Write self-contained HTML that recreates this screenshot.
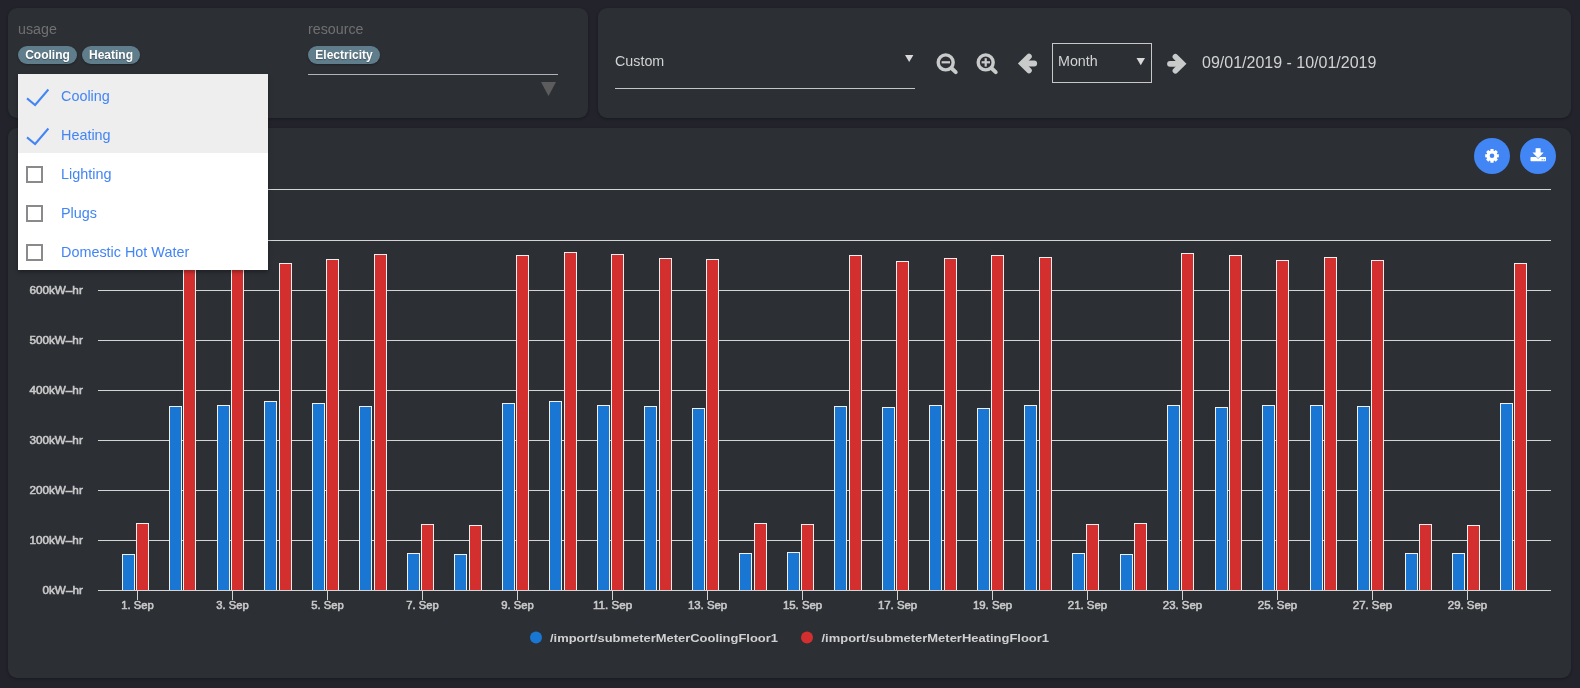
<!DOCTYPE html>
<html><head><meta charset="utf-8"><title>Energy</title>
<style>
*{box-sizing:border-box;margin:0;padding:0}
html,body{width:1580px;height:688px;overflow:hidden;background:#22232b;font-family:"Liberation Sans",sans-serif;}
.panel{position:absolute;background:#2c2f34;border-radius:9px;box-shadow:0 1px 3px rgba(0,0,0,.25)}
#p1{left:8px;top:8px;width:580px;height:110px}
#p2{left:598px;top:8px;width:973px;height:110px}
#p3{left:8px;top:128px;width:1563px;height:550px}
.abs{position:absolute}
.lbl{position:absolute;color:#707070;font-size:14.25px;line-height:16px}
.chip{position:absolute;top:46px;height:18px;border-radius:9px;background:#607d8b;color:#fff;font-weight:bold;font-size:12px;line-height:18px;text-align:center;text-shadow:0 1px 1px rgba(0,0,0,.35);box-shadow:0 1px 2px rgba(0,0,0,.3)}
.dd{position:absolute;left:18px;top:74px;width:250px;height:196px;background:#fff;box-shadow:0 2px 4px rgba(0,0,0,.35)}
.dd .sel{position:absolute;left:0;top:0;width:250px;height:79px;background:#eeeeee}
.dd .it{position:absolute;left:43px;color:#4285f4;font-size:14.4px;line-height:16px;white-space:nowrap}
.dd .cb{position:absolute;left:8px;width:17px;height:17px;border:2px solid #8a8a8a;background:#fff}
svg.chart{position:absolute;left:0;top:0}
svg.chart text{font-family:"Liberation Sans",sans-serif;font-weight:normal;font-size:10.5px;fill:#c8c8c8;stroke:#c8c8c8;stroke-width:0.55px}
svg.chart .lg{font-size:11.5px;font-weight:bold;fill:#d0d0d0;stroke:none}
.txt{position:absolute;color:#d2d2d2;white-space:nowrap}
</style></head><body>
<div id="wrap" style="position:absolute;left:0;top:0;width:1580px;height:688px;will-change:transform">
<div class="panel" id="p1"></div>
<div class="panel" id="p2"></div>
<div class="panel" id="p3"></div>

<svg class="chart" width="1580" height="688" viewBox="0 0 1580 688">
<g shape-rendering="crispEdges"><path d="M98 189.5H1551" stroke="#d4d4d4" stroke-width="1"/><path d="M98 240.5H1551" stroke="#d4d4d4" stroke-width="1"/><path d="M98 290.5H1551" stroke="#d4d4d4" stroke-width="1"/><path d="M98 340.5H1551" stroke="#d4d4d4" stroke-width="1"/><path d="M98 390.5H1551" stroke="#d4d4d4" stroke-width="1"/><path d="M98 440.5H1551" stroke="#d4d4d4" stroke-width="1"/><path d="M98 490.5H1551" stroke="#d4d4d4" stroke-width="1"/><path d="M98 540.5H1551" stroke="#d4d4d4" stroke-width="1"/></g>
<g stroke="#f0f0f0" stroke-width="1" shape-rendering="crispEdges"><rect x="122.5" y="554.5" width="12" height="36" fill="#1976d2"/><rect x="136.5" y="523.5" width="12" height="67" fill="#d32f2f"/><rect x="169.5" y="406.5" width="12" height="184" fill="#1976d2"/><rect x="183.5" y="258.5" width="12" height="332" fill="#d32f2f"/><rect x="217.5" y="405.5" width="12" height="185" fill="#1976d2"/><rect x="231.5" y="258.5" width="12" height="332" fill="#d32f2f"/><rect x="264.5" y="401.5" width="12" height="189" fill="#1976d2"/><rect x="279.5" y="263.5" width="12" height="327" fill="#d32f2f"/><rect x="312.5" y="403.5" width="12" height="187" fill="#1976d2"/><rect x="326.5" y="259.5" width="12" height="331" fill="#d32f2f"/><rect x="359.5" y="406.5" width="12" height="184" fill="#1976d2"/><rect x="374.5" y="254.5" width="12" height="336" fill="#d32f2f"/><rect x="407.5" y="553.5" width="12" height="37" fill="#1976d2"/><rect x="421.5" y="524.5" width="12" height="66" fill="#d32f2f"/><rect x="454.5" y="554.5" width="12" height="36" fill="#1976d2"/><rect x="469.5" y="525.5" width="12" height="65" fill="#d32f2f"/><rect x="502.5" y="403.5" width="12" height="187" fill="#1976d2"/><rect x="516.5" y="255.5" width="12" height="335" fill="#d32f2f"/><rect x="549.5" y="401.5" width="12" height="189" fill="#1976d2"/><rect x="564.5" y="252.5" width="12" height="338" fill="#d32f2f"/><rect x="597.5" y="405.5" width="12" height="185" fill="#1976d2"/><rect x="611.5" y="254.5" width="12" height="336" fill="#d32f2f"/><rect x="644.5" y="406.5" width="12" height="184" fill="#1976d2"/><rect x="659.5" y="258.5" width="12" height="332" fill="#d32f2f"/><rect x="692.5" y="408.5" width="12" height="182" fill="#1976d2"/><rect x="706.5" y="259.5" width="12" height="331" fill="#d32f2f"/><rect x="739.5" y="553.5" width="12" height="37" fill="#1976d2"/><rect x="754.5" y="523.5" width="12" height="67" fill="#d32f2f"/><rect x="787.5" y="552.5" width="12" height="38" fill="#1976d2"/><rect x="801.5" y="524.5" width="12" height="66" fill="#d32f2f"/><rect x="834.5" y="406.5" width="12" height="184" fill="#1976d2"/><rect x="849.5" y="255.5" width="12" height="335" fill="#d32f2f"/><rect x="882.5" y="407.5" width="12" height="183" fill="#1976d2"/><rect x="896.5" y="261.5" width="12" height="329" fill="#d32f2f"/><rect x="929.5" y="405.5" width="12" height="185" fill="#1976d2"/><rect x="944.5" y="258.5" width="12" height="332" fill="#d32f2f"/><rect x="977.5" y="408.5" width="12" height="182" fill="#1976d2"/><rect x="991.5" y="255.5" width="12" height="335" fill="#d32f2f"/><rect x="1024.5" y="405.5" width="12" height="185" fill="#1976d2"/><rect x="1039.5" y="257.5" width="12" height="333" fill="#d32f2f"/><rect x="1072.5" y="553.5" width="12" height="37" fill="#1976d2"/><rect x="1086.5" y="524.5" width="12" height="66" fill="#d32f2f"/><rect x="1120.5" y="554.5" width="12" height="36" fill="#1976d2"/><rect x="1134.5" y="523.5" width="12" height="67" fill="#d32f2f"/><rect x="1167.5" y="405.5" width="12" height="185" fill="#1976d2"/><rect x="1181.5" y="253.5" width="12" height="337" fill="#d32f2f"/><rect x="1215.5" y="407.5" width="12" height="183" fill="#1976d2"/><rect x="1229.5" y="255.5" width="12" height="335" fill="#d32f2f"/><rect x="1262.5" y="405.5" width="12" height="185" fill="#1976d2"/><rect x="1276.5" y="260.5" width="12" height="330" fill="#d32f2f"/><rect x="1310.5" y="405.5" width="12" height="185" fill="#1976d2"/><rect x="1324.5" y="257.5" width="12" height="333" fill="#d32f2f"/><rect x="1357.5" y="406.5" width="12" height="184" fill="#1976d2"/><rect x="1371.5" y="260.5" width="12" height="330" fill="#d32f2f"/><rect x="1405.5" y="553.5" width="12" height="37" fill="#1976d2"/><rect x="1419.5" y="524.5" width="12" height="66" fill="#d32f2f"/><rect x="1452.5" y="553.5" width="12" height="37" fill="#1976d2"/><rect x="1467.5" y="525.5" width="12" height="65" fill="#d32f2f"/><rect x="1500.5" y="403.5" width="12" height="187" fill="#1976d2"/><rect x="1514.5" y="263.5" width="12" height="327" fill="#d32f2f"/></g>
<g shape-rendering="crispEdges"><path d="M98 590.5H1551" stroke="#d4d4d4" stroke-width="1"/><path d="M137.5 591V600" stroke="#d4d4d4" stroke-width="1"/><path d="M232.5 591V600" stroke="#d4d4d4" stroke-width="1"/><path d="M327.5 591V600" stroke="#d4d4d4" stroke-width="1"/><path d="M422.5 591V600" stroke="#d4d4d4" stroke-width="1"/><path d="M517.5 591V600" stroke="#d4d4d4" stroke-width="1"/><path d="M612.5 591V600" stroke="#d4d4d4" stroke-width="1"/><path d="M707.5 591V600" stroke="#d4d4d4" stroke-width="1"/><path d="M802.5 591V600" stroke="#d4d4d4" stroke-width="1"/><path d="M897.5 591V600" stroke="#d4d4d4" stroke-width="1"/><path d="M992.5 591V600" stroke="#d4d4d4" stroke-width="1"/><path d="M1087.5 591V600" stroke="#d4d4d4" stroke-width="1"/><path d="M1182.5 591V600" stroke="#d4d4d4" stroke-width="1"/><path d="M1277.5 591V600" stroke="#d4d4d4" stroke-width="1"/><path d="M1372.5 591V600" stroke="#d4d4d4" stroke-width="1"/><path d="M1467.5 591V600" stroke="#d4d4d4" stroke-width="1"/></g>
<g class="yl"><text x="42.5" y="593.8" textLength="40.3" lengthAdjust="spacingAndGlyphs">0kW–hr</text><text x="29.4" y="543.8" textLength="53.4" lengthAdjust="spacingAndGlyphs">100kW–hr</text><text x="29.4" y="493.8" textLength="53.4" lengthAdjust="spacingAndGlyphs">200kW–hr</text><text x="29.4" y="443.8" textLength="53.4" lengthAdjust="spacingAndGlyphs">300kW–hr</text><text x="29.4" y="393.8" textLength="53.4" lengthAdjust="spacingAndGlyphs">400kW–hr</text><text x="29.4" y="343.8" textLength="53.4" lengthAdjust="spacingAndGlyphs">500kW–hr</text><text x="29.4" y="293.8" textLength="53.4" lengthAdjust="spacingAndGlyphs">600kW–hr</text></g>
<g class="xl"><text x="121.3" y="608.7" textLength="32.4" lengthAdjust="spacingAndGlyphs">1. Sep</text><text x="216.3" y="608.7" textLength="32.4" lengthAdjust="spacingAndGlyphs">3. Sep</text><text x="311.3" y="608.7" textLength="32.4" lengthAdjust="spacingAndGlyphs">5. Sep</text><text x="406.3" y="608.7" textLength="32.4" lengthAdjust="spacingAndGlyphs">7. Sep</text><text x="501.3" y="608.7" textLength="32.4" lengthAdjust="spacingAndGlyphs">9. Sep</text><text x="592.9" y="608.7" textLength="39.3" lengthAdjust="spacingAndGlyphs">11. Sep</text><text x="687.9" y="608.7" textLength="39.3" lengthAdjust="spacingAndGlyphs">13. Sep</text><text x="782.9" y="608.7" textLength="39.3" lengthAdjust="spacingAndGlyphs">15. Sep</text><text x="877.9" y="608.7" textLength="39.3" lengthAdjust="spacingAndGlyphs">17. Sep</text><text x="972.9" y="608.7" textLength="39.3" lengthAdjust="spacingAndGlyphs">19. Sep</text><text x="1067.8" y="608.7" textLength="39.3" lengthAdjust="spacingAndGlyphs">21. Sep</text><text x="1162.8" y="608.7" textLength="39.3" lengthAdjust="spacingAndGlyphs">23. Sep</text><text x="1257.8" y="608.7" textLength="39.3" lengthAdjust="spacingAndGlyphs">25. Sep</text><text x="1352.8" y="608.7" textLength="39.3" lengthAdjust="spacingAndGlyphs">27. Sep</text><text x="1447.8" y="608.7" textLength="39.3" lengthAdjust="spacingAndGlyphs">29. Sep</text></g>
<circle cx="536" cy="637.5" r="6" fill="#1976d2"/>
<text class="lg" x="550" y="642" textLength="228" lengthAdjust="spacingAndGlyphs">/import/submeterMeterCoolingFloor1</text>
<circle cx="807" cy="637.5" r="6" fill="#d32f2f"/>
<text class="lg" x="821.5" y="642" textLength="227.5" lengthAdjust="spacingAndGlyphs">/import/submeterMeterHeatingFloor1</text>
</svg>

<div class="lbl" style="left:18px;top:21px">usage</div>
<div class="chip" style="left:18px;width:59px">Cooling</div>
<div class="chip" style="left:82px;width:58px">Heating</div>
<div class="lbl" style="left:308px;top:21px">resource</div>
<div class="chip" style="left:308px;width:72px">Electricity</div>
<div class="abs" style="left:308px;top:74px;width:250px;height:1px;background:#b4b4b4"></div>
<svg class="abs" style="left:541px;top:82px" width="15" height="14"><path d="M0 0H15L7.5 14Z" fill="#5c5c5c"/></svg>

<div class="dd">
 <div class="sel"></div>
 <svg class="abs" style="left:0;top:0" width="60" height="80"><g fill="none" stroke="#4285f4" stroke-width="2"><path d="M9 24.4L17.1 31L30.4 15.5"/><path d="M9 63.4L17.1 70L30.4 54.5"/></g></svg>
 <div class="it" style="top:14px">Cooling</div>
 <div class="it" style="top:53px">Heating</div>
 <div class="cb" style="top:92px"></div><div class="it" style="top:92px">Lighting</div>
 <div class="cb" style="top:131px"></div><div class="it" style="top:131px">Plugs</div>
 <div class="cb" style="top:170px"></div><div class="it" style="top:170px">Domestic Hot Water</div>
</div>

<div class="txt" style="left:615px;top:53px;font-size:14.3px;line-height:16px">Custom</div>
<div class="abs" style="left:615px;top:88px;width:300px;height:1px;background:#c4c4c4"></div>
<svg class="abs" style="left:905px;top:55px" width="9" height="8"><path d="M0 0H8.4L4.2 7Z" fill="#d8d8d8"/></svg>

<svg class="abs" style="left:925px;top:40px" width="280" height="50" viewBox="925 40 280 50">
 <g fill="none" stroke="#c9caca" stroke-linecap="round" stroke-linejoin="round">
  <circle cx="945.7" cy="62.4" r="7.5" stroke-width="3.4"/>
  <path d="M951.6 68.3L955.7 72.1" stroke-width="4"/>
  <circle cx="985.7" cy="62.4" r="7.5" stroke-width="3.4"/>
  <path d="M991.6 68.3L995.7 72.1" stroke-width="4"/>
  <path d="M1029 56.5L1021.9 63.5L1029 70.5" stroke-width="5.6" stroke-linejoin="miter"/><path d="M1023 63.5H1034.2" stroke-width="5.8"/>
  <path d="M1175.4 56.8L1182.5 63.8L1175.4 70.8" stroke-width="5.6" stroke-linejoin="miter"/><path d="M1181.4 63.8H1170" stroke-width="5.8"/>
 </g>
 <g fill="#c9caca">
  <rect x="941.6" y="61.2" width="8.4" height="2.2"/>
  <rect x="981.6" y="61.2" width="8.4" height="2.2"/>
  <rect x="984.6" y="58.2" width="2.2" height="8.4"/>
 </g>
</svg>
<div class="abs" style="left:1052px;top:43px;width:100px;height:40px;border:1px solid #c8c8c8"></div>
<div class="txt" style="left:1058px;top:53px;font-size:14.3px;line-height:16px">Month</div>
<svg class="abs" style="left:1136px;top:58px" width="10" height="8"><path d="M0.5 0H9L4.75 7.2Z" fill="#d8d8d8"/></svg>
<div class="txt" style="left:1202px;top:54px;font-size:16px;line-height:18px">09/01/2019 - 10/01/2019</div>

<svg class="abs" style="left:1470px;top:134px" width="100" height="44" viewBox="1470 134 100 44">
 <circle cx="1492" cy="156" r="18" fill="#4285f4"/>
 <circle cx="1538" cy="156" r="18" fill="#4285f4"/>
 <path d="M1490.35 150.66L1490.47 148.97 L1493.53 148.97 L1493.65 150.66A5.40 5.40 0 0 1 1494.47 151.00L1495.75 149.89 L1497.91 152.05 L1496.80 153.33A5.40 5.40 0 0 1 1497.14 154.15L1498.83 154.27 L1498.83 157.33 L1497.14 157.45A5.40 5.40 0 0 1 1496.80 158.27L1497.91 159.55 L1495.75 161.71 L1494.47 160.60A5.40 5.40 0 0 1 1493.65 160.94L1493.53 162.63 L1490.47 162.63 L1490.35 160.94A5.40 5.40 0 0 1 1489.53 160.60L1488.25 161.71 L1486.09 159.55 L1487.20 158.27A5.40 5.40 0 0 1 1486.86 157.45L1485.17 157.33 L1485.17 154.27 L1486.86 154.15A5.40 5.40 0 0 1 1487.20 153.33L1486.09 152.05 L1488.25 149.89 L1489.53 151.00A5.40 5.40 0 0 1 1490.35 150.66ZM1489.70 155.80 a2.30 2.30 0 1 0 4.60 0 a2.30 2.30 0 1 0 -4.60 0Z" fill="#fff" fill-rule="evenodd"/><rect x="1530.5" y="157" width="15.5" height="4.3" rx="0.7" fill="#fff"/>
<path d="M1535.6 148.3H1540.6V152.6H1543.7L1538.1 158.2L1532.5 152.6H1535.6Z" fill="#fff" stroke="#4285f4" stroke-width="1.1" stroke-linejoin="round"/>
<path d="M1535.6 148.3H1540.6V152.6H1543.7L1538.1 158.2L1532.5 152.6H1535.6Z" fill="#fff"/>
<rect x="1541.6" y="159.2" width="1.2" height="1.1" fill="#4285f4"/><rect x="1543.7" y="159.2" width="1.2" height="1.1" fill="#4285f4"/>
</svg>
</div>
</body></html>
